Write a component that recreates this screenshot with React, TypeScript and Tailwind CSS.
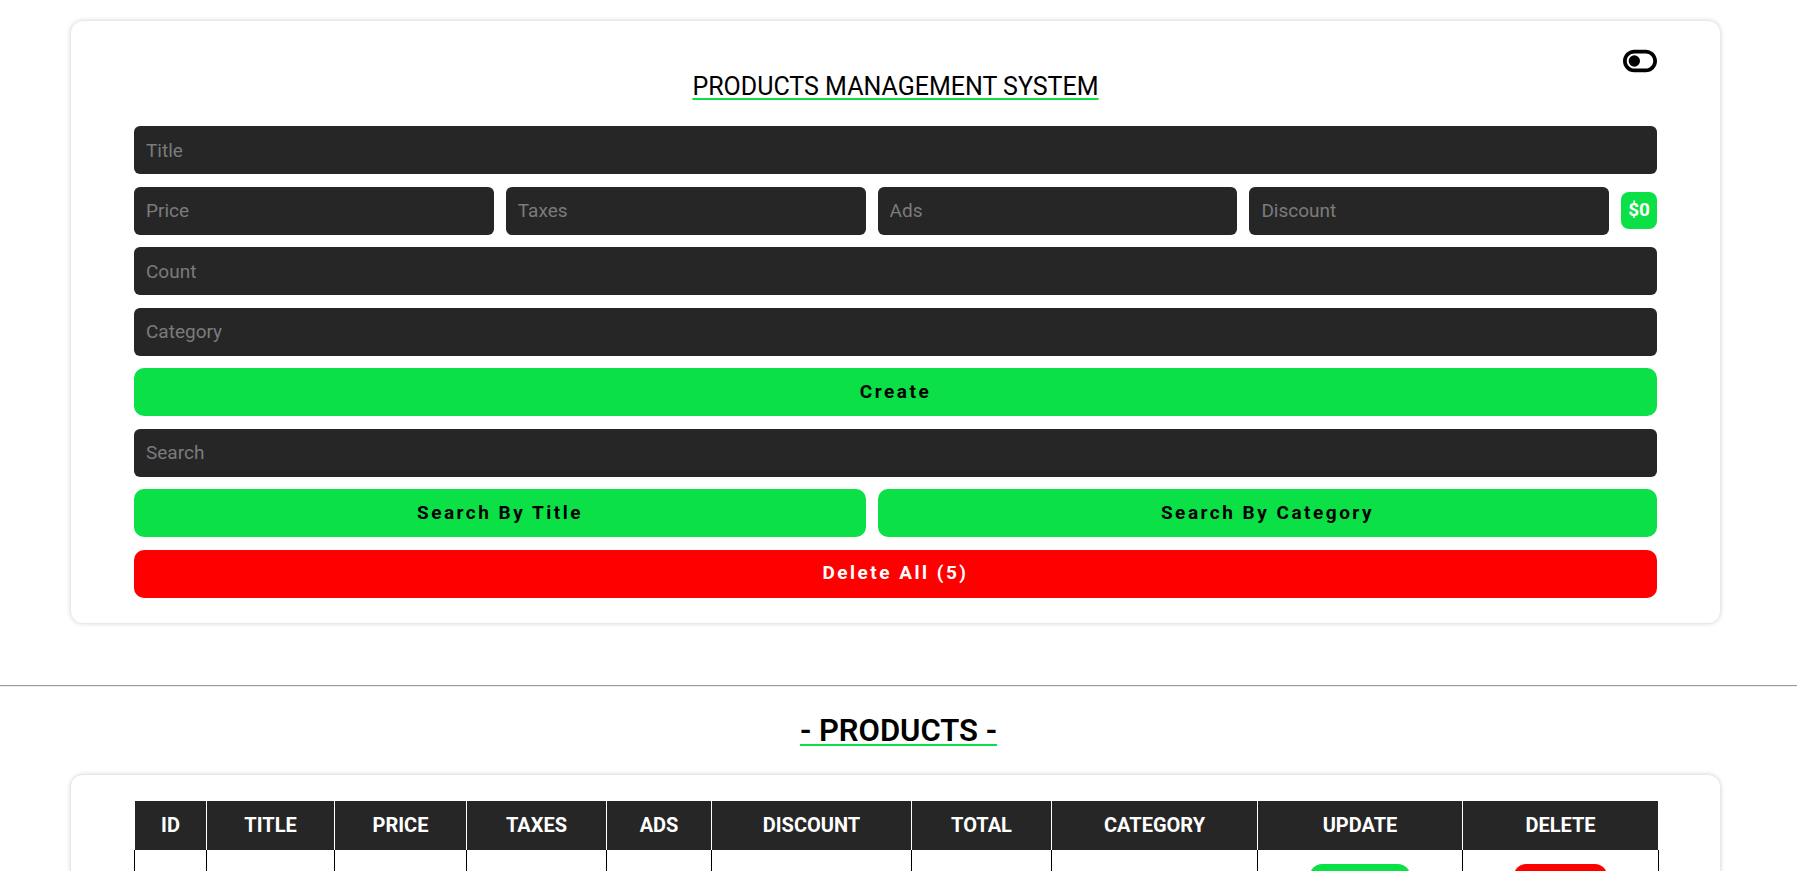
import { FaToggleOff } from "react-icons/fa6";

const products = [
  { id: 1, title: "phone", price: 1000, taxes: 100, ads: 50, discount: 20, category: "mobile" },
  { id: 2, title: "laptop", price: 2500, taxes: 200, ads: 80, discount: 100, category: "computers" },
  { id: 3, title: "tv", price: 1800, taxes: 150, ads: 40, discount: 60, category: "electronics" },
  { id: 4, title: "watch", price: 300, taxes: 30, ads: 10, discount: 5, category: "accessories" },
  { id: 5, title: "tablet", price: 900, taxes: 90, ads: 30, discount: 15, category: "mobile" },
];

const columns = [
  { label: "id", width: "w-[72px]" },
  { label: "title", width: "w-[128px]" },
  { label: "price", width: "w-[132px]" },
  { label: "taxes", width: "w-[140px]" },
  { label: "ads", width: "w-[105px]" },
  { label: "discount", width: "w-[200px]" },
  { label: "total", width: "w-[140px]" },
  { label: "category", width: "w-[206px]" },
  { label: "update", width: "w-[205px]" },
  { label: "delete", width: "w-[196px]" },
];

const inputClass =
  "h-[48px] w-full rounded-[6px] bg-[#272627] px-3 text-[19px] text-white outline-none placeholder:text-[#7b7b7b]";

const buttonClass =
  "h-[48px] rounded-[10px] text-[19px] font-bold tracking-[2.5px]";

export default function App() {
  return (
    <div className="min-h-screen bg-white pt-[21px] font-[Roboto,'Liberation_Sans',sans-serif] text-black">
      <section className="relative ml-[71px] w-[1649px] rounded-[12px] bg-white px-[63px] pt-[51px] pb-[25px] shadow-[0_0_5px_rgba(0,0,0,0.22)]">
        <button className="absolute top-[23px] right-[63px] text-black">
          <FaToggleOff size={34} />
        </button>
        <h1 className="text-center text-[25px] leading-[29px] font-normal underline decoration-[#0be146] decoration-2 underline-offset-[3px]">
          PRODUCTS MANAGEMENT SYSTEM
        </h1>

        <div className="mt-[25px] flex flex-col gap-[12.5px]">
          <input className={inputClass} placeholder="Title" />
          <div className="flex items-center gap-3">
            <input className={inputClass} placeholder="Price" />
            <input className={inputClass} placeholder="Taxes" />
            <input className={inputClass} placeholder="Ads" />
            <input className={inputClass} placeholder="Discount" />
            <span className="flex h-[37px] shrink-0 items-center rounded-[8px] bg-[#0be146] px-[7px] text-[19px] font-bold text-white">
              $0
            </span>
          </div>
          <input className={inputClass} placeholder="Count" />
          <input className={inputClass} placeholder="Category" />
          <button className={`${buttonClass} w-full bg-[#0be146] text-black`}>Create</button>
          <input className={inputClass} placeholder="Search" />
          <div className="flex gap-3">
            <button className={`${buttonClass} grow basis-auto bg-[#0be146] text-black`}>Search By Title</button>
            <button className={`${buttonClass} grow basis-auto bg-[#0be146] text-black`}>Search By Category</button>
          </div>
          <button className={`${buttonClass} w-full bg-[#ff0000] text-white`}>Delete All (5)</button>
        </div>
      </section>

      <hr className="mt-[62px] border-t border-b border-t-[#9a9a9a] border-b-[#eeeeee]" />

      <h2 className="mt-[26px] text-center text-[31px] leading-[36px] font-semibold">
        <span className="underline decoration-[#0be146] decoration-2 underline-offset-[3px]">- PRODUCTS -</span>
      </h2>

      <section className="mt-[26px] ml-[71px] w-[1649px] rounded-[12px] bg-white px-[63px] pt-[26px] pb-[26px] shadow-[0_0_5px_rgba(0,0,0,0.22)]">
        <table className="w-full table-fixed border-collapse text-center">
          <thead>
            <tr className="bg-[#272627] text-white">
              {columns.map((c) => (
                <th
                  key={c.label}
                  className={`${c.width} h-[49px] border-x border-white text-[20px] font-bold uppercase`}
                >
                  {c.label}
                </th>
              ))}
            </tr>
          </thead>
          <tbody>
            {products.map((p) => (
              <tr key={p.id} className="text-[18px]">
                <td className="border-x border-black py-[14px]">{p.id}</td>
                <td className="border-x border-black py-[14px]">{p.title}</td>
                <td className="border-x border-black py-[14px]">{p.price}</td>
                <td className="border-x border-black py-[14px]">{p.taxes}</td>
                <td className="border-x border-black py-[14px]">{p.ads}</td>
                <td className="border-x border-black py-[14px]">{p.discount}</td>
                <td className="border-x border-black py-[14px]">{p.price + p.taxes + p.ads - p.discount}</td>
                <td className="border-x border-black py-[14px]">{p.category}</td>
                <td className="border-x border-black py-[14px]">
                  <button className="h-[40px] rounded-[12px] bg-[#0be146] px-3 text-[19px] font-bold tracking-[2.5px] text-black">
                    Update
                  </button>
                </td>
                <td className="border-x border-black py-[14px]">
                  <button className="h-[40px] rounded-[12px] bg-[#ff0000] px-3 text-[19px] font-bold tracking-[2.5px] text-white">
                    Delete
                  </button>
                </td>
              </tr>
            ))}
          </tbody>
        </table>
      </section>
    </div>
  );
}
